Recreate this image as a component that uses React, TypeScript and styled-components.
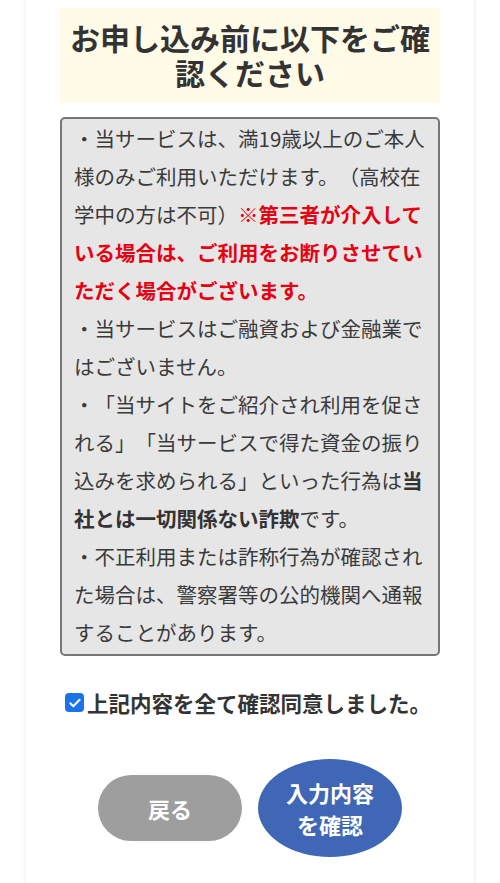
import React, { useState } from "react";
import styled, { createGlobalStyle } from "styled-components";

const GlobalStyle = createGlobalStyle`
    html, body {
        margin: 0;
        padding: 0;
        background: #ffffff;
    }
    body {
        font-family: "Noto Sans CJK JP", "Noto Sans", sans-serif;
        color: #333333;
        text-spacing-trim: space-all;
    }
`;

const Page = styled.div`
    width: 448px;
    min-height: 883px;
    margin: 0 auto;
    background: #ffffff;
    box-shadow: 0 0 4px rgba(0, 0, 0, 0.12);
    padding: 8px 34px 0;
    box-sizing: border-box;
`;

const TitleBox = styled.div`
    background: #fffbe6;
    padding: 12px 8px 13px;
    text-align: center;
`;

const Title = styled.h2`
    margin: 0;
    font-size: 30px;
    line-height: 35px;
    font-weight: 700;
    color: #333333;
`;

const NoticeBox = styled.div`
    margin-top: 14px;
    background: #e6e6e6;
    border: 2px solid #777777;
    border-radius: 5px;
    padding: 0 11px 3px 12px;
    font-size: 20.5px;
    line-height: 38px;
    color: #3a3a3a;
`;

const Item = styled.p`
    margin: 0;
`;

const Warn = styled.strong`
    color: #e60012;
    font-weight: 700;
`;

const Strong = styled.strong`
    color: #333333;
    font-weight: 700;
`;

const AgreeRow = styled.label`
    display: flex;
    align-items: center;
    gap: 3px;
    margin-top: 31px;
    padding-left: 5px;
    font-size: 21.5px;
    font-weight: 700;
    color: #333333;
    cursor: pointer;
`;

const HiddenInput = styled.input`
    position: absolute;
    opacity: 0;
    width: 0;
    height: 0;
`;

const CheckMark = styled.span<{ $on: boolean }>`
    display: inline-flex;
    align-items: center;
    justify-content: center;
    width: 19px;
    height: 19px;
    border-radius: 4px;
    background: ${(p) => (p.$on ? "#1a73e8" : "#ffffff")};
    border: ${(p) => (p.$on ? "none" : "2px solid #767676")};
    box-sizing: border-box;
    flex-shrink: 0;
`;

const Buttons = styled.div`
    display: flex;
    justify-content: center;
    align-items: center;
    gap: 16px;
    margin-top: 41px;
`;

const Button = styled.button<{ $variant: "back" | "submit" }>`
    width: 144px;
    height: ${(p) => (p.$variant === "submit" ? "98px" : "66px")};
    border: none;
    border-radius: ${(p) => (p.$variant === "submit" ? "50% / 50%" : "33px")};
    background: ${(p) => (p.$variant === "submit" ? "#4067b5" : "#9e9e9e")};
    color: #ffffff;
    font-family: inherit;
    font-size: 22px;
    line-height: 32px;
    font-weight: 700;
    padding: 0 20px;
    cursor: pointer;
`;

const App = () => {
    const [agreed, setAgreed] = useState(true);

    return (
        <>
            <GlobalStyle />
            <Page>
                <TitleBox>
                    <Title>お申し込み前に以下をご確認ください</Title>
                </TitleBox>
                <NoticeBox>
                    <Item>
                        ・当サービスは、満19歳以上のご本人様のみご利用いただけます。（高校在学中の方は不可）
                        <Warn>※第三者が介入している場合は、ご利用をお断りさせていただく場合がございます。</Warn>
                    </Item>
                    <Item>・当サービスはご融資および金融業ではございません。</Item>
                    <Item>
                        ・「当サイトをご紹介され利用を促される」「当サービスで得た資金の振り込みを求められる」といった行為は
                        <Strong>当社とは一切関係ない詐欺</Strong>です。
                    </Item>
                    <Item>・不正利用または詐称行為が確認された場合は、警察署等の公的機関へ通報することがあります。</Item>
                </NoticeBox>
                <AgreeRow>
                    <HiddenInput
                        type="checkbox"
                        checked={agreed}
                        onChange={(e) => setAgreed(e.target.checked)}
                    />
                    <CheckMark $on={agreed}>
                        {agreed && (
                            <svg width="14" height="14" viewBox="0 0 24 24" fill="none">
                                <path
                                    d="M4 12.5l5 5L20 6.5"
                                    stroke="#ffffff"
                                    strokeWidth="3.4"
                                    strokeLinecap="round"
                                    strokeLinejoin="round"
                                />
                            </svg>
                        )}
                    </CheckMark>
                    上記内容を全て確認同意しました。
                </AgreeRow>
                <Buttons>
                    <Button $variant="back">戻る</Button>
                    <Button $variant="submit">入力内容を確認</Button>
                </Buttons>
            </Page>
        </>
    );
};

export default App;
